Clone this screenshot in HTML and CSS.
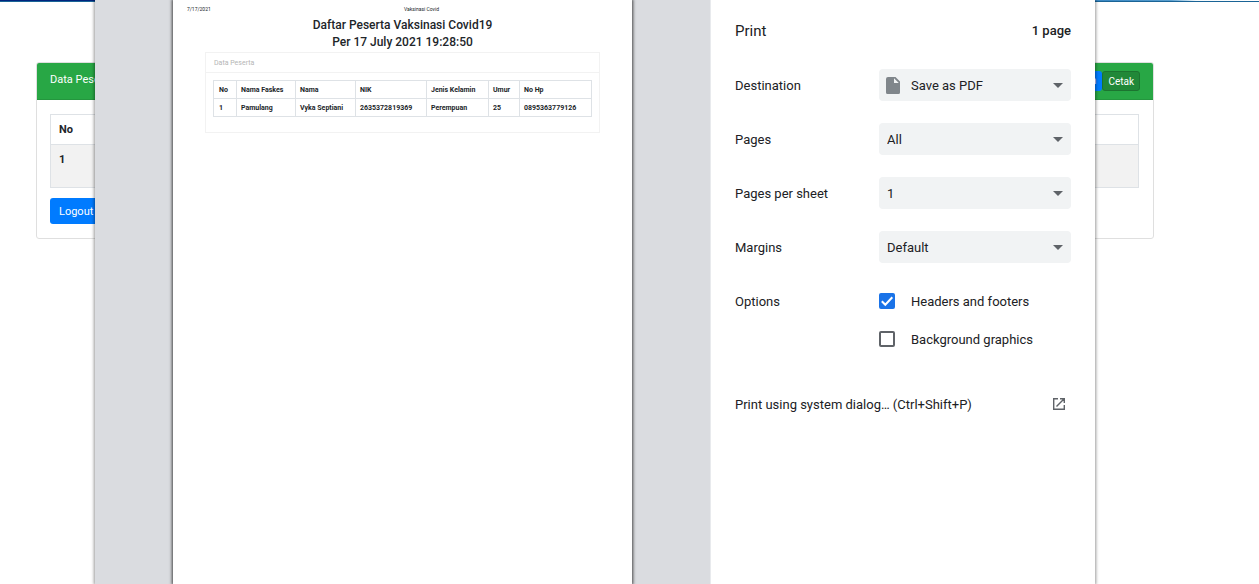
FILE: index.html
```html
<!DOCTYPE html>
<html lang="en">
<head>
<meta charset="utf-8">
<meta name="viewport" content="width=device-width, initial-scale=1">
<title>Vaksinasi Covid</title>
<link rel="stylesheet" href="styles.css">
</head>
<body>
<div class="banner"></div>
<main class="site">
  <section class="card">
    <header class="card-header">
      <span>Data Peserta</span>
      <div class="card-actions">
        <button class="btn btn-small" type="button">Cari Semua Laporan</button>
        <button class="btn btn-small btn-print" type="button">Cetak</button>
      </div>
    </header>
    <div class="card-body">
      <table class="list">
        <thead><tr><th>No</th></tr></thead>
        <tbody><tr><td>1</td></tr></tbody>
      </table>
      <button class="btn" type="button">Logout</button>
    </div>
  </section>
</main>

<div class="overlay">
  <div class="dialog" role="dialog" aria-label="Print">
    <div class="preview">
      <article class="sheet">
        <div class="running-head"><span>7/17/2021</span><span>Vaksinasi Covid</span><span></span></div>
        <div class="sheet-body">
          <h1 class="sheet-title">Daftar Peserta Vaksinasi Covid19</h1>
          <h2 class="sheet-title">Per 17 July 2021 19:28:50</h2>
          <section class="report">
            <header class="report-header">Data Peserta</header>
            <div class="report-body">
              <table class="report-table">
                <colgroup>
                  <col class="col-no"><col class="col-place"><col class="col-name"><col class="col-nik"><col class="col-sex"><col class="col-age"><col>
                </colgroup>
                <thead>
                  <tr><th>No</th><th>Nama Faskes</th><th>Nama</th><th>NIK</th><th>Jenis Kelamin</th><th>Umur</th><th>No Hp</th></tr>
                </thead>
                <tbody>
                  <tr><td>1</td><td>Pamulang</td><td>Vyka Septiani</td><td>2635372819369</td><td>Perempuan</td><td>25</td><td>0895363779126</td></tr>
                </tbody>
              </table>
            </div>
          </section>
        </div>
      </article>
    </div>

    <form class="settings">
      <header class="settings-header">
        <h2 class="settings-title">Print</h2>
        <span class="page-count">1 page</span>
      </header>
      <div class="field">
        <label for="destination">Destination</label>
        <div class="select-box">
          <select id="destination" class="with-icon"><option>Save as PDF</option></select>
          <svg class="file-icon" viewBox="0 0 14 17" aria-hidden="true"><path fill="#80868b" fill-rule="evenodd" d="M2 0h7.500L14 4.500V15.500a1.500 1.500 0 0 1-1.500 1.500h-11A1.500 1.500 0 0 1 0 15.500V2A2 2 0 0 1 2 0zM8 1.200V6h4.800z"/></svg>
          <svg class="arrow" viewBox="0 0 10 5" aria-hidden="true"><path fill="#5f6368" d="M0 0h10L5 5z"/></svg>
        </div>
      </div>
      <div class="field">
        <label for="pages">Pages</label>
        <div class="select-box">
          <select id="pages"><option>All</option></select>
          <svg class="arrow" viewBox="0 0 10 5" aria-hidden="true"><path fill="#5f6368" d="M0 0h10L5 5z"/></svg>
        </div>
      </div>
      <div class="field">
        <label for="per-sheet">Pages per sheet</label>
        <div class="select-box">
          <select id="per-sheet"><option>1</option></select>
          <svg class="arrow" viewBox="0 0 10 5" aria-hidden="true"><path fill="#5f6368" d="M0 0h10L5 5z"/></svg>
        </div>
      </div>
      <div class="field">
        <label for="margins">Margins</label>
        <div class="select-box">
          <select id="margins"><option>Default</option></select>
          <svg class="arrow" viewBox="0 0 10 5" aria-hidden="true"><path fill="#5f6368" d="M0 0h10L5 5z"/></svg>
        </div>
      </div>
      <div class="options" role="group" aria-labelledby="options-label">
        <span id="options-label" class="options-label">Options</span>
        <div class="checks">
          <div class="check">
            <span class="check-box">
              <input id="headers" type="checkbox" checked>
              <svg class="tick" viewBox="0 0 16 16" aria-hidden="true"><path d="M2.800 8.200l3.500 3.500 7-7.400" fill="none" stroke="#fff" stroke-width="2"/></svg>
            </span>
            <label for="headers">Headers and footers</label>
          </div>
          <div class="check">
            <span class="check-box"><input id="backgrounds" type="checkbox"></span>
            <label for="backgrounds">Background graphics</label>
          </div>
        </div>
      </div>
      <button class="system-link" type="button">
        <span>Print using system dialog… (Ctrl+Shift+P)</span>
        <svg class="launch" viewBox="0 0 12 12" aria-hidden="true"><path d="M5 .7H.7v10.600h10.600V7M7 .7h4.300V5M11.200.800L3.500 8.500" fill="none" stroke="#5f6368" stroke-width="1.400"/></svg>
      </button>
    </form>
  </div>
</div>
</body>
</html>
```
FILE: styles.css
```css
* { box-sizing: border-box; }

body {
  margin: 0;
  min-height: 100vh;
  overflow: hidden;
  background: #fff;
  color: #212529;
  font: 11px/16px Roboto, "Liberation Sans", sans-serif;
}

button, input, select { font: inherit; color: inherit; margin: 0; }
h1, h2 { margin: 0; }
table { width: 100%; border-collapse: collapse; }
th, td { text-align: left; font-weight: 700; border: 1px solid #dee2e6; }

.banner {
  height: 2px;
  border-bottom: 1px solid #1a6496;
  background: linear-gradient(90deg, #00247d 0, #00247d 50%, #3d8ac4 88%, #5a9fce 93%, #f4fafd 95%, #fff);
}

/* Page behind the dialog */
.site { padding: 60px 105px 0 36px; }
.card { border: 1px solid #dfdfdf; border-radius: 3px; overflow: hidden; }
.card-header {
  display: flex;
  justify-content: space-between;
  align-items: flex-start;
  height: 37px;
  padding: 8px 13px;
  border-bottom: 1px solid #24963e;
  background: #28a745;
  color: #fff;
}
.card-header > span { padding-top: 1px; }
.card-actions { display: flex; }
.card-body { padding: 14px 14px 14px 13px; }
.list { margin-bottom: 10px; }
.list th { height: 30px; padding: 0 8px; }
.list td { height: 43px; padding: 7px 8px; vertical-align: top; background: #f2f2f2; }

.btn {
  display: block;
  padding: 6px 9px 4px;
  border: 0;
  border-radius: 3px;
  background: #007bff;
  color: #fff;
}
.btn-small { padding: 2px 6px; font-size: 10px; }
.btn-print { padding: 2px 5px 0; border: 1px solid #1c7430; background: #218838; }

/* Print dialog */
.overlay {
  position: absolute;
  inset: 0 69px 0 0;
  display: flex;
  justify-content: center;
}
.dialog {
  display: flex;
  width: 100%;
  max-width: 1000px;
  background: #fff;
  box-shadow: 0 0 3px 1px rgba(0, 0, 0, .4);
}
.preview {
  flex: 1;
  padding: 0 78px;
  border-right: 1px solid #e8eaed;
  background: #dadce0;
}
.sheet {
  height: 100%;
  background: #fff;
  box-shadow: 0 0 3px 1px rgba(0, 0, 0, .7);
}
.running-head {
  display: grid;
  grid-template-columns: 1fr auto 1fr;
  padding: 5px 14px 0;
  font-size: 5px;
  line-height: 8px;
}
.running-head span:nth-child(2) { padding-left: 38px; }
.sheet-body { padding: 4px 32px 0; }
.sheet-title { font-size: 12px; line-height: 17px; font-weight: 500; text-align: center; }
.report { margin-top: 1px; border: 1px solid #f2f2f2; }
.report-header {
  padding: 2px 8px 1px;
  border-bottom: 1px solid #f2f2f2;
  color: #b5b5b5;
  font-size: 7px;
}
.report-body { padding: 7px 7px 15px; }
.report-table { table-layout: fixed; font-size: 7px; line-height: 9px; }
.report-table th, .report-table td { padding: 5px 4px 3px; white-space: nowrap; }
.report-table th:first-child, .report-table td:first-child { padding-left: 5px; }
.col-no { width: 23px; }
.col-place { width: 59px; }
.col-name { width: 60px; }
.col-nik { width: 71px; }
.col-sex { width: 62px; }
.col-age { width: 31px; }

.settings {
  width: 384px;
  padding: 20px 24px;
  color: #202124;
  font-size: 13px;
  line-height: 20px;
}
.settings-header { display: flex; justify-content: space-between; align-items: center; padding-top: 1px; margin-bottom: 28px; }
.settings-title { font-size: 15px; line-height: 20px; font-weight: 400; }
.page-count { font-weight: 500; }
.field {
  display: grid;
  grid-template-columns: 1fr 192px;
  align-items: center;
  margin-bottom: 22px;
}
.field > label, .options-label, .check label { padding-top: 2px; }
.select-box { position: relative; }
.select-box select {
  display: block;
  appearance: none;
  width: 100%;
  height: 32px;
  padding: 2px 32px 0 8px;
  border: 0;
  border-radius: 4px;
  background: #f1f3f4;
}
.select-box .with-icon { padding-left: 32px; }
.file-icon { position: absolute; left: 7px; top: 8px; width: 14px; height: 17px; }
.arrow { position: absolute; right: 8px; top: 14px; width: 10px; height: 5px; }

.options { display: grid; grid-template-columns: 1fr 192px; padding-top: 5px; }
.checks { display: grid; gap: 16px; }
.check { display: flex; align-items: center; gap: 16px; }
.check-box { position: relative; display: block; width: 16px; height: 16px; }
.check-box input {
  display: block;
  appearance: none;
  width: 16px;
  height: 16px;
  border: 2px solid #5f6368;
  border-radius: 2px;
}
.check-box input:checked { border-color: #1a73e8; background: #1a73e8; }
.tick { position: absolute; inset: 0; }

.system-link {
  display: flex;
  justify-content: space-between;
  align-items: center;
  width: 100%;
  margin-top: 43px;
  padding: 0 6px 0 0;
  border: 0;
  background: none;
}
.system-link span { padding-top: 2px; }
.launch { width: 12px; height: 12px; }
```
